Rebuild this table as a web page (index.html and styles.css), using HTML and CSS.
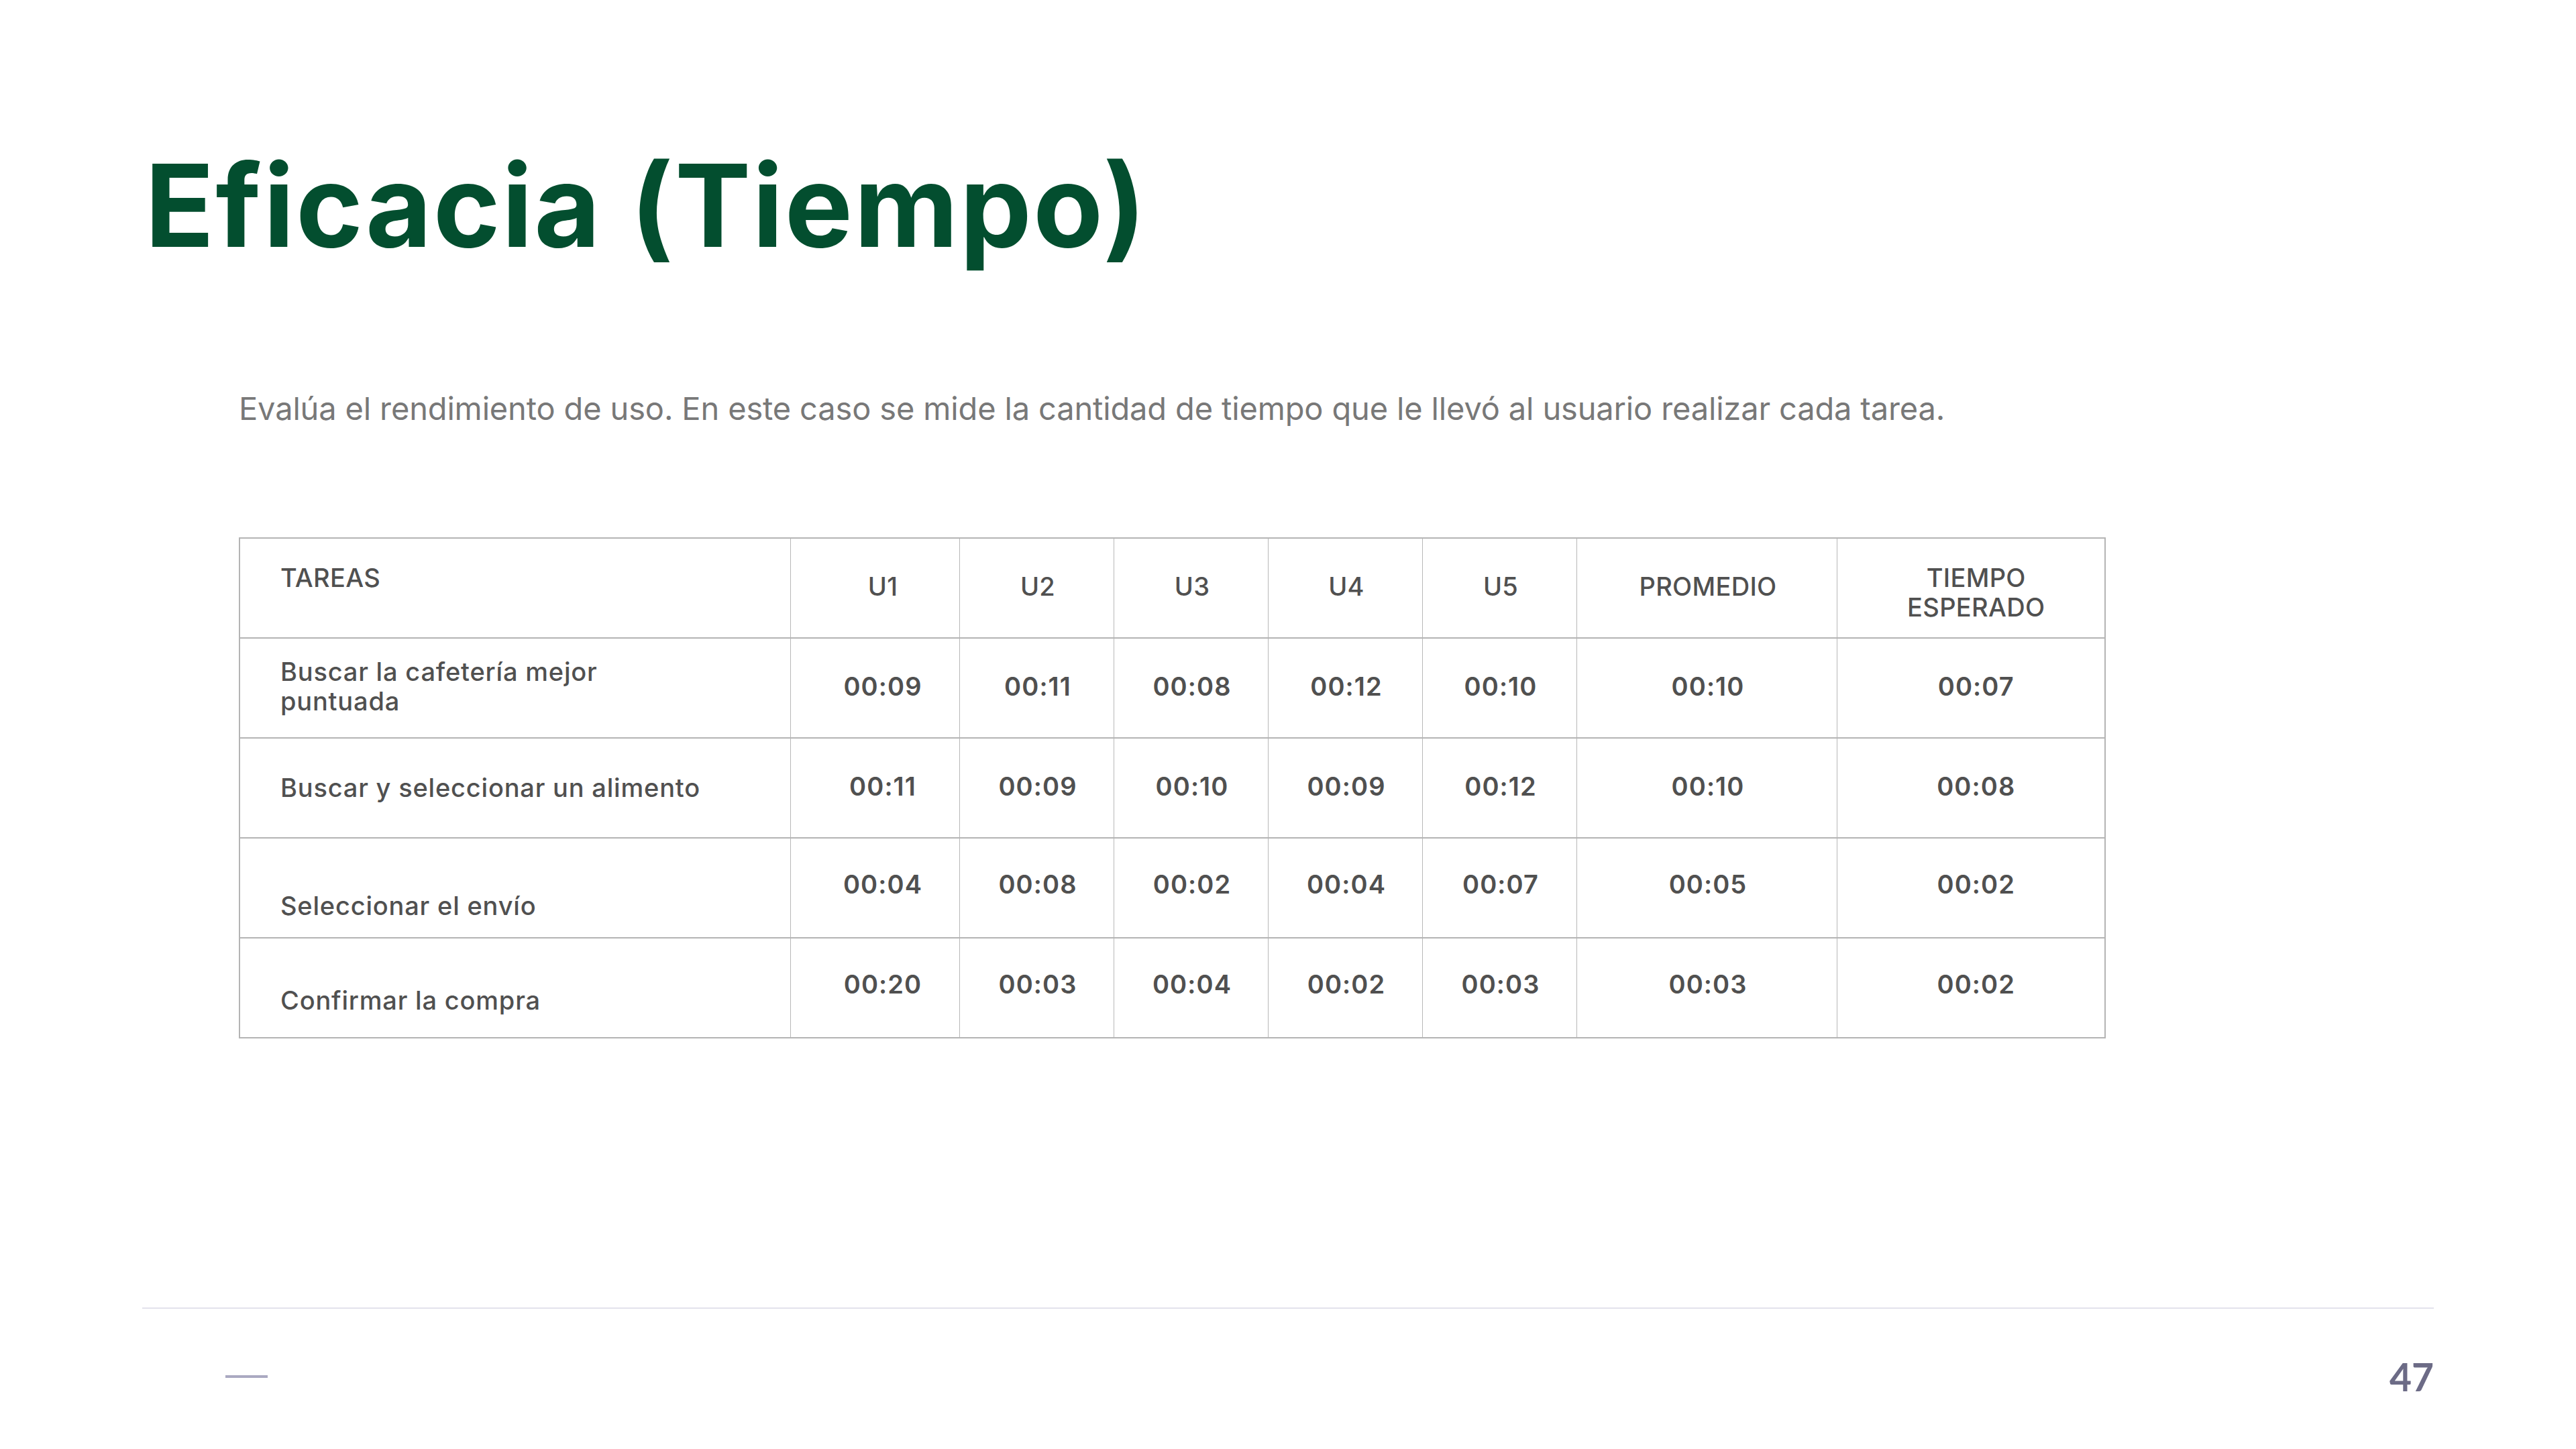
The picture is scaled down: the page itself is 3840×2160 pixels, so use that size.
FILE: index.html
```html
<!DOCTYPE html>
<html lang="es">
<head>
<meta charset="utf-8">
<title>Eficacia (Tiempo)</title>
<link rel="stylesheet" href="styles.css">
</head>
<body>
<div class="slide">
  <h1 class="title">Eficacia (Tiempo)</h1>
  <p class="lead">Evalúa el rendimiento de uso. En este caso se mide la cantidad de tiempo que le llevó al usuario realizar cada tarea.</p>
  <div class="table-wrap">
    <table class="data">
      <colgroup>
        <col class="c-task"><col class="c-u1"><col class="c-u"><col class="c-u"><col class="c-u"><col class="c-u"><col class="c-avg"><col class="c-exp">
      </colgroup>
      <thead>
        <tr>
          <th class="task head-task">TAREAS</th>
          <th>U1</th><th>U2</th><th>U3</th><th>U4</th><th>U5</th><th>PROMEDIO</th><th class="two">TIEMPO<br>ESPERADO</th>
        </tr>
      </thead>
      <tbody>
        <tr>
          <td class="task">Buscar la cafetería mejor<br>puntuada</td>
          <td>00:09</td><td>00:11</td><td>00:08</td><td>00:12</td><td>00:10</td><td>00:10</td><td>00:07</td>
        </tr>
        <tr>
          <td class="task t2">Buscar y seleccionar un alimento</td>
          <td>00:11</td><td>00:09</td><td>00:10</td><td>00:09</td><td>00:12</td><td>00:10</td><td>00:08</td>
        </tr>
        <tr class="low">
          <td class="task t3">Seleccionar el envío</td>
          <td>00:04</td><td>00:08</td><td>00:02</td><td>00:04</td><td>00:07</td><td>00:05</td><td>00:02</td>
        </tr>
        <tr class="low">
          <td class="task t4">Confirmar la compra</td>
          <td>00:20</td><td>00:03</td><td>00:04</td><td>00:02</td><td>00:03</td><td>00:03</td><td>00:02</td>
        </tr>
      </tbody>
    </table>
  </div>
  <footer class="foot">
    <span class="dash"></span>
    <span class="page">47</span>
  </footer>
</div>
</body>
</html>
```
FILE: styles.css
```css
html, body {
  margin: 0;
  padding: 0;
  background: #ffffff;
}
.slide {
  width: 3840px;
  height: 2160px;
  box-sizing: border-box;
  padding: 0 212px;
  display: flex;
  flex-direction: column;
  font-family: "Inter", "Lato", "Liberation Sans", sans-serif;
}
.title {
  margin: 221px 0 0 0;
  font-family: "Inter", "Lato", sans-serif;
  font-weight: 700;
  font-size: 170px;
  line-height: 170px;
  height: 170px;
  color: #034e2f;
  letter-spacing: 2.2px;
  padding-left: 4px;
}
.lead {
  margin: 189px 0 0 0;
  padding-left: 144px;
  font-size: 47px;
  line-height: 58px;
  letter-spacing: -0.15px;
  color: #787878;
  font-weight: 400;
}
.table-wrap {
  margin-top: 163px;
  padding-left: 144px;
}
.data {
  border-collapse: collapse;
  table-layout: fixed;
  width: 2781px;
  color: #505050;
  font-size: 38px;
  line-height: 44px;
}
.c-task { width: 821px; }
.c-u1 { width: 252px; }
.c-u { width: 230px; }
.c-avg { width: 388px; }
.c-exp { width: 400px; }
.data th, .data td {
  box-sizing: border-box;
  height: 149px;
  padding: 0 0 5px 4px;
  border-top: 2px solid #b4b4b4;
  border-bottom: 2px solid #b4b4b4;
  border-left: 1px solid #b8b8b8;
  border-right: 1px solid #b8b8b8;
  text-align: center;
  vertical-align: middle;
  font-weight: 600;
  letter-spacing: 1.1px;
}
.data th {
  font-weight: 500;
  letter-spacing: 0.3px;
}
.data tr > :nth-child(2) { padding-left: 24px; }
.data tr > :last-child { padding-left: 16px; }
.data tr > :first-child { border-left: 2px solid #b4b4b4; }
.data tr > :last-child { border-right: 2px solid #b4b4b4; }
.data .task {
  text-align: left;
  padding-left: 60px;
  font-weight: 500;
  letter-spacing: 0.8px;
}
.data th.task {
  letter-spacing: 0.3px;
}
.data .head-task {
  vertical-align: top;
  padding-top: 36px;
}
.data th.two {
  padding-top: 17px;
}
.data td.t2 {
  padding-top: 4px;
}
.data tr.low td {
  padding-bottom: 12px;
}
.data td.t3 {
  vertical-align: top;
  padding-top: 78px;
  padding-bottom: 0;
}
.data td.t4 {
  vertical-align: top;
  padding-top: 70px;
  padding-bottom: 0;
}
.foot {
  margin-top: auto;
  height: 202px;
  border-top: 2px solid #e3e2ec;
  display: flex;
  justify-content: space-between;
  align-items: center;
  padding: 0 0 7px 124px;
  box-sizing: content-box;
}
.dash {
  width: 63px;
  height: 4px;
  background: #aaa9c1;
}
.page {
  font-family: "Lato", sans-serif;
  font-weight: 700;
  font-size: 57px;
  line-height: 60px;
  color: #6c6b86;
}
```
